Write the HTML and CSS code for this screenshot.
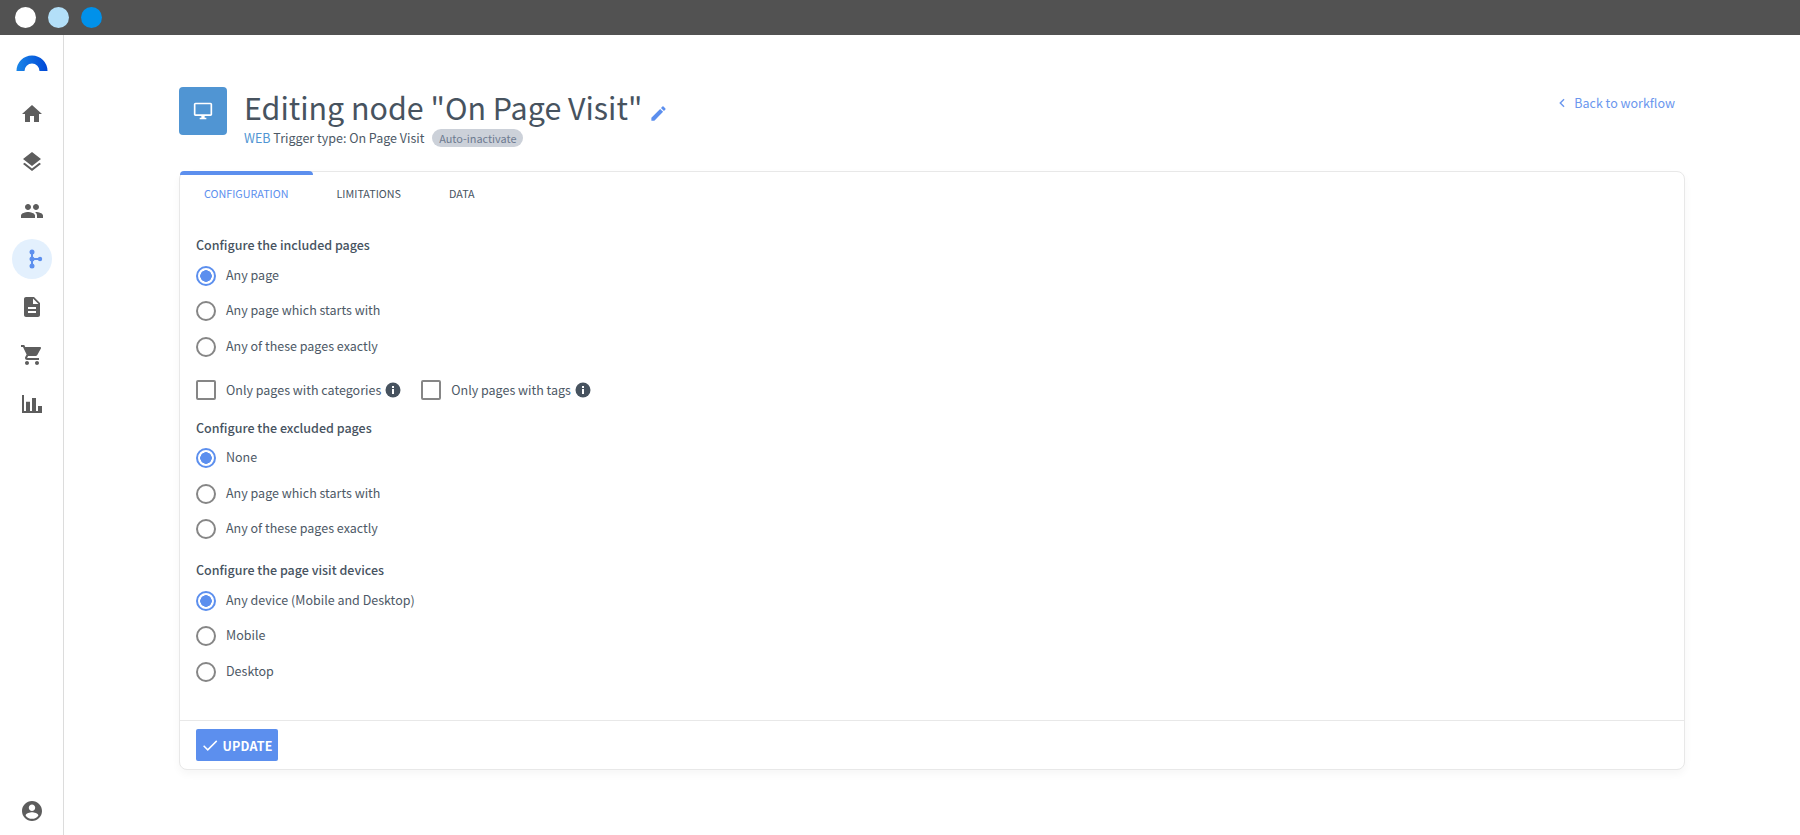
FILE: index.html
```html
<!DOCTYPE html>
<html lang="en">
<head>
<meta charset="utf-8">
<title>Editing node</title>
<link rel="stylesheet" href="styles.css">
</head>
<body>
<header class="topbar">
  <span class="dot dot-white"></span>
  <span class="dot dot-light"></span>
  <span class="dot dot-blue"></span>
</header>
<div class="app">
  <nav class="sidebar">
    <svg class="logo" viewBox="0 0 32 16" width="32" height="16"><defs><linearGradient id="lg" x1="0" x2="1" y1="0" y2="0"><stop offset="0" stop-color="#1a86e8"/><stop offset="1" stop-color="#0047d6"/></linearGradient></defs><path d="M0.500 16A15.500 15.500 0 0 1 31.500 16H23.500A7.500 7.500 0 0 0 8.500 16Z" fill="url(#lg)"/></svg>
    <a class="nav-item"><svg viewBox="0 0 24 24" width="24" height="24"><path d="M10 20v-6h4v6h5v-8h3L12 3 2 12h3v8z"/></svg></a>
    <a class="nav-item"><svg viewBox="0 0 24 24" width="24" height="24"><path d="M11.99 18.54l-7.37-5.73L3 14.07l9 7 9-7-1.63-1.27-7.38 5.74zM12 16l7.36-5.73L21 9l-9-7-9 7 1.63 1.27L12 16z"/></svg></a>
    <a class="nav-item"><svg viewBox="0 0 24 24" width="24" height="24"><path d="M16 11c1.66 0 2.99-1.34 2.99-3S17.66 5 16 5c-1.66 0-3 1.34-3 3s1.34 3 3 3zm-8 0c1.66 0 2.99-1.34 2.99-3S9.66 5 8 5C6.34 5 5 6.34 5 8s1.34 3 3 3zm0 2c-2.33 0-7 1.17-7 3.5V19h14v-2.5c0-2.33-4.67-3.5-7-3.5zm8 0c-.29 0-.62.02-.97.05 1.16.84 1.97 1.97 1.97 3.45V19h6v-2.5c0-2.33-4.67-3.5-7-3.5z"/></svg></a>
    <a class="nav-item nav-active"><svg viewBox="0 0 24 24" width="24" height="24"><path d="M11 5h2v14h-2zM12 11h8v2h-8z"/><circle cx="12" cy="5" r="2.500"/><circle cx="12" cy="19" r="2.500"/><circle cx="12" cy="12" r="2.500"/><circle cx="20" cy="12" r="2.200"/></svg></a>
    <a class="nav-item"><svg viewBox="0 0 24 24" width="24" height="24"><path d="M14 2H6c-1.1 0-2 .9-2 2v16c0 1.1.9 2 2 2h12c1.1 0 2-.9 2-2V8l-6-6zm2 16H8v-2h8v2zm0-4H8v-2h8v2zm-3-5V3.5L18.5 9H13z"/></svg></a>
    <a class="nav-item"><svg viewBox="0 0 24 24" width="24" height="24"><path d="M7 18c-1.1 0-1.99.9-1.99 2S5.900 22 7 22s2-.9 2-2-.9-2-2-2zM1 2v2h2l3.600 7.590-1.350 2.450c-.16.28-.25.61-.25.96 0 1.100.9 2 2 2h12v-2H7.420c-.14 0-.25-.11-.25-.25l.03-.12.9-1.630h7.450c.75 0 1.410-.41 1.750-1.030l3.580-6.490c.08-.14.12-.31.12-.48 0-.55-.45-1-1-1H5.210l-.94-2H1zm16 16c-1.100 0-1.990.9-1.990 2s.89 2 1.990 2 2-.9 2-2-.9-2-2-2z"/></svg></a>
    <a class="nav-item"><svg viewBox="0 0 24 24" width="24" height="24"><path d="M2 3h2v16h18v2H2zM6 9.700h4V19H6zM12 6h4v13h-4zM18 14h4v5h-4z"/></svg></a>
    <a class="nav-item nav-bottom"><svg viewBox="0 0 24 24" width="24" height="24"><path d="M12 2C6.480 2 2 6.480 2 12s4.480 10 10 10 10-4.480 10-10S17.520 2 12 2zm0 3.500c1.800 0 3.200 1.400 3.200 3.200S13.800 11.900 12 11.900 8.800 10.500 8.800 8.700 10.200 5.500 12 5.500zm0 14.300c-2.700 0-5-1.300-6.400-3.400.1-2 4.300-3.100 6.400-3.100s6.300 1.100 6.400 3.100c-1.400 2.100-3.700 3.400-6.400 3.400z"/></svg></a>
  </nav>
  <main class="content">
    <div class="page-head">
      <div class="node-icon"><svg viewBox="0 0 24 24" width="20" height="20"><path d="M21 2H3c-1.100 0-2 .9-2 2v12c0 1.100.9 2 2 2h7v2H8v2h8v-2h-2v-2h7c1.100 0 2-.9 2-2V4c0-1.100-.9-2-2-2zm0 14H3V4h18v12z"/></svg></div>
      <div class="head-text">
        <h1 class="title">Editing node "On Page Visit" <svg class="pencil" viewBox="0 0 24 24" width="19" height="19"><path d="M3 17.250V21h3.750L17.810 9.940l-3.750-3.750L3 17.250zM20.710 7.040a1 1 0 0 0 0-1.410l-2.340-2.340a1 1 0 0 0-1.410 0l-1.830 1.830 3.750 3.750 1.830-1.830z"/></svg></h1>
        <div class="subtitle"><span class="web">WEB</span> Trigger type: On Page Visit <span class="badge">Auto-inactivate</span></div>
      </div>
      <a class="back"><svg viewBox="0 0 24 24" width="14" height="14"><path d="M15.500 5.500L9 12l6.500 6.500" fill="none" stroke="currentColor" stroke-width="2.400"/></svg><span>Back to workflow</span></a>
    </div>
    <section class="card">
      <div class="tabs">
        <a class="tab tab-active">CONFIGURATION</a>
        <a class="tab">LIMITATIONS</a>
        <a class="tab">DATA</a>
      </div>
      <div class="card-body">
        <h2 class="group-title">Configure the included pages</h2>
        <label class="opt"><span class="radio radio-on"></span>Any page</label>
        <label class="opt"><span class="radio"></span>Any page which starts with</label>
        <label class="opt"><span class="radio"></span>Any of these pages exactly</label>
        <div class="checks">
          <label class="check"><span class="box"></span>Only pages with categories <svg class="info" viewBox="0 0 16 16" width="16" height="16"><circle cx="8" cy="8" r="7.500"/><path d="M7 7h2v5H7zM7 4h2v2H7z" fill="#fff"/></svg></label>
          <label class="check"><span class="box"></span>Only pages with tags <svg class="info" viewBox="0 0 16 16" width="16" height="16"><circle cx="8" cy="8" r="7.500"/><path d="M7 7h2v5H7zM7 4h2v2H7z" fill="#fff"/></svg></label>
        </div>
        <h2 class="group-title group-second">Configure the excluded pages</h2>
        <label class="opt"><span class="radio radio-on"></span>None</label>
        <label class="opt"><span class="radio"></span>Any page which starts with</label>
        <label class="opt"><span class="radio"></span>Any of these pages exactly</label>
        <h2 class="group-title group-third">Configure the page visit devices</h2>
        <label class="opt"><span class="radio radio-on"></span>Any device (Mobile and Desktop)</label>
        <label class="opt"><span class="radio"></span>Mobile</label>
        <label class="opt"><span class="radio"></span>Desktop</label>
      </div>
      <div class="card-foot">
        <button class="update"><svg viewBox="0 0 24 24" width="18" height="18"><path d="M3.500 13l5.500 5.500L21 6.500" fill="none" stroke="currentColor" stroke-width="2"/></svg>UPDATE</button>
      </div>
    </section>
  </main>
</div>
</body>
</html>
```
FILE: styles.css
```css
* { box-sizing: border-box; }
html, body { margin: 0; height: 100%; }
body {
  background: #fff;
  color: #4d5966;
  font-family: "Noto Sans CJK SC", "Noto Sans", sans-serif;
  font-size: 12.500px;
  line-height: 20px;
  overflow: hidden;
}
.topbar {
  height: 35px;
  background: #525252;
  display: flex;
  align-items: center;
  gap: 12px;
  padding-left: 15px;
}
.dot { width: 21px; height: 21px; border-radius: 50%; }
.dot-white { background: #fff; }
.dot-light { background: #b3dff8; }
.dot-blue { background: #0091ea; }
.app { display: flex; height: 800px; }
.sidebar {
  width: 64px;
  flex: none;
  border-right: 1px solid #dcdcdc;
  display: flex;
  flex-direction: column;
  align-items: center;
  padding: 20px 0 0 0;
}
.logo { margin-bottom: 23px; }
.nav-item {
  width: 40px;
  height: 40px;
  margin-bottom: 8.300px;
  border-radius: 50%;
  display: flex;
  align-items: center;
  justify-content: center;
  fill: #5d5d5d;
}
.nav-active { background: #e3f0fd; fill: #5c8fee; }
.nav-bottom { margin-top: auto; margin-bottom: 4px; }
.content { flex: 1; padding: 52px 115px 0 115px; }
.page-head { display: flex; align-items: flex-start; margin-bottom: 23px; }
.node-icon {
  width: 48px;
  height: 48px;
  border-radius: 4px;
  background: #5095d3;
  fill: #fff;
  display: flex;
  align-items: center;
  justify-content: center;
  margin-right: 17px;
}
.head-text { flex: 1; }
.title {
  margin: 0;
  font-size: 30.400px;
  line-height: 40px;
  font-weight: 400;
  color: #47535f;
  display: flex;
  align-items: center;
  gap: 7px;
}
.pencil { fill: #5c8fee; margin-top: 13px; }
.subtitle {
  line-height: 20px;
  margin-top: 1px;
}
.web { color: #5095d3; }
.badge {
  display: inline-block;
  background: #ccd1d9;
  color: #6c7a90;
  border-radius: 9px;
  font-size: 10.900px;
  line-height: 18px;
  padding: 0 7px;
  margin-left: 5px;
}
.back {
  display: flex;
  align-items: center;
  gap: 5px;
  color: #6b97ee;
  margin: 6px 0 0 0;
  padding-right: 10px;
}
.card {
  border: 1px solid #e8e8e8;
  border-radius: 8px;
  box-shadow: 0 4px 8px rgba(0, 0, 0, 0.04);
  height: 599px;
  display: flex;
  flex-direction: column;
  background: #fff;
}
.tabs { display: flex; height: 34px; }
.tab {
  font-size: 10.750px;
  line-height: 20px;
  padding: 12px 24px 0;
  color: #47535f;
  position: relative;
}
.tab-active { color: #5c8fee; }
.tab-active::before {
  content: "";
  position: absolute;
  left: 0;
  right: 0;
  top: -1px;
  height: 4px;
  background: #5c8fee;
  border-radius: 4px 4px 0 0;
}
.card-body { flex: 1; padding: 29px 16px 0; }
.group-title {
  margin: 0 0 3px;
  font-size: 12.500px;
  line-height: 20px;
  font-weight: 500;
  color: #47535f;
}
.group-second { margin-top: 9px; }
.group-third { margin-top: 13px; }
.opt, .check { display: flex; align-items: center; }
.opt { height: 35.500px; padding-bottom: 2px; }
.radio {
  width: 20px;
  height: 20px;
  border: 2px solid #868686;
  border-radius: 50%;
  margin: 2px 10px 0 0;
  flex: none;
}
.radio-on {
  border-color: #5c8fee;
  background: radial-gradient(circle, #5c8fee 0 5.500px, #fff 6px);
}
.checks { display: flex; gap: 20px; margin-top: 7px; height: 37px; padding-bottom: 1px; }
.box {
  width: 20px;
  height: 20px;
  border: 2px solid #868686;
  border-radius: 2px;
  margin-right: 10px;
  flex: none;
}
.info { fill: #47535f; margin-left: 4px; }
.card-foot {
  height: 49px;
  border-top: 1px solid #e8e8e8;
  padding: 8px 16px 0;
}
.update {
  width: 82px;
  height: 32px;
  border: 0;
  border-radius: 2px;
  background: #5c8fee;
  color: #fff;
  font-family: inherit;
  font-size: 12.500px;
  font-weight: 700;
  letter-spacing: 0.200px;
  display: flex;
  align-items: center;
  justify-content: center;
  gap: 3px;
  padding: 0;
}
```
